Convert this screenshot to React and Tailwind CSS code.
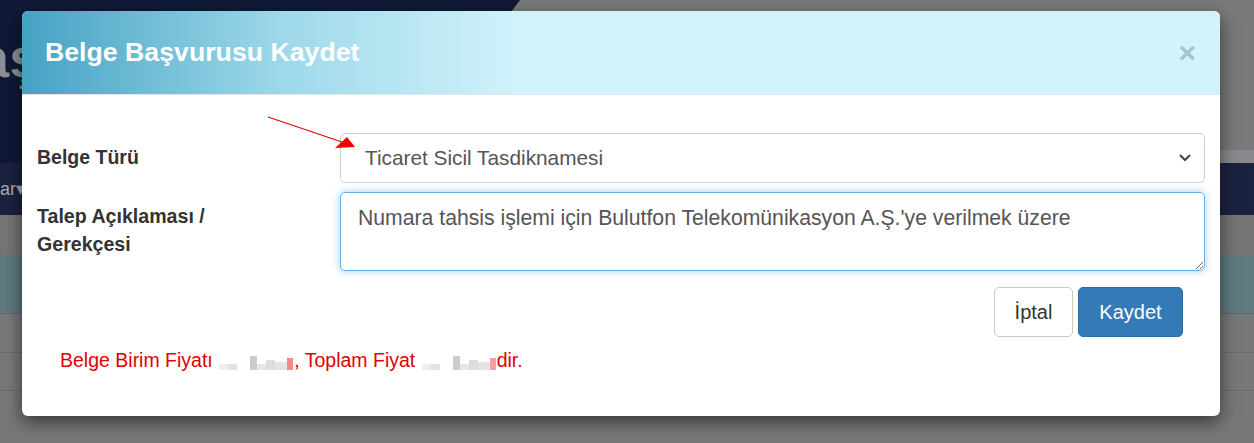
import React from 'react';

const Blur = ({ tail }) => (
    <span className="inline-flex items-end h-[18px] mx-[1px] align-[-3px] gap-0">
        <span className="w-[9px] h-[6px] bg-[#eee]" />
        <span className="w-[9px] h-[6px] bg-[#e2e2e2]" />
        <span className="w-[13px] h-[6px] bg-white" />
        <span className="w-[7px] h-[14px] bg-[#ccc]" />
        <span className="w-[9px] h-[6px] bg-[#e6e6e6]" />
        <span className="w-[9px] h-[10px] bg-[#ddd]" />
        <span className="w-[12px] h-[8px] bg-[#e4e4e4]" />
        <span className={`w-[6px] h-[12px] ${tail}`} />
    </span>
);

const App = () => {
    return (
        <div className="relative w-full h-[443px] overflow-hidden bg-[#777] font-['Liberation_Sans',Arial,sans-serif]">
            {/* page behind the backdrop */}
            <div className="relative h-[163px] bg-[#7a7a7a]">
                <svg className="absolute inset-0" width="1254" height="163">
                    <polygon points="0,0 520,0 505,20 470,163 0,163" fill="#0f1936" />
                    <rect x="1220" y="150" width="34" height="13" fill="#8a8a8e" />
                </svg>
                <div className="absolute left-[-22px] top-[30px] text-[56px] font-bold text-[#8e8e96] leading-none">aş</div>
            </div>
            <div className="h-[52px] bg-[#1b2240] flex items-center text-[18px] text-[#a9acb6]">ar▾</div>
            <div className="h-[40px] bg-[#757575]" />
            <div className="h-[58px] bg-[#5f7a80]" />
            <div className="h-[39px] bg-[#787878] border-t border-[#666]" />
            <div className="h-[38px] bg-[#787878] border-t border-[#6a6a6a]" />
            <div className="h-[53px] bg-[#787878] border-t border-[#6a6a6a]" />

            {/* modal */}
            <div className="absolute inset-0 pt-[11px] pl-[22px] pr-[34px]">
                <div className="relative h-[405px] bg-white rounded-[6px] overflow-hidden shadow-[0_6px_18px_rgba(0,0,0,0.55)]">
                    <div className="h-[84px] flex items-center justify-between pl-[23px] pr-[24px] border-b border-[#e5e5e5] bg-[linear-gradient(90deg,#45a2c4_0%,#9fd9ea_22%,#d2f3fc_42%,#d2f3fc_100%)]">
                        <h4 className="text-[26.7px] font-bold text-white leading-none">Belge Başvurusu Kaydet</h4>
                        <span className="text-[30px] font-bold text-[#a8c2c8] leading-none">×</span>
                    </div>

                    <div className="px-[15px] pt-[38px]">
                        <div className="flex items-center">
                            <label className="w-[303px] text-[19.5px] font-bold text-[#333]">Belge Türü</label>
                            <div className="flex-1 h-[50px] border border-[#ccc] rounded-[5px] flex items-center justify-between pl-[24px] pr-[12px] text-[20.8px] text-[#555]">
                                <span>Ticaret Sicil Tasdiknamesi</span>
                                <svg width="14" height="10" viewBox="0 0 14 10">
                                    <polyline points="2,2 7,7 12,2" fill="none" stroke="#444" strokeWidth="2" />
                                </svg>
                            </div>
                        </div>

                        <div className="flex items-start mt-[9px]">
                            <label className="w-[303px] pt-[10px] text-[19.6px] leading-[28px] font-bold text-[#333]">
                                Talep Açıklaması /<br />Gerekçesi
                            </label>
                            <textarea
                                readOnly
                                value="Numara tahsis işlemi için Bulutfon Telekomünikasyon A.Ş.'ye verilmek üzere"
                                className="flex-1 h-[79px] border border-[#66afe9] rounded-[5px] px-[17px] py-[12px] text-[21.2px] leading-[26px] text-[#555] outline-none shadow-[0_0_8px_rgba(102,175,233,0.6)] font-['Liberation_Sans',Arial,sans-serif]"
                            />
                        </div>

                        <div className="flex justify-end gap-[5px] mt-[16px] pr-[22px]">
                            <button className="w-[79px] h-[50px] border border-[#ccc] rounded-[5px] bg-white text-[20px] text-[#333]">İptal</button>
                            <button className="w-[105px] h-[50px] border border-[#2e6da4] rounded-[5px] bg-[#337ab7] text-[20px] text-white">Kaydet</button>
                        </div>

                        <p className="mt-[9px] pl-[23px] text-[19.5px] text-[#e00000]">
                            Belge Birim Fiyatı <Blur tail="bg-[#f28a8a]" />, Toplam Fiyat <Blur tail="bg-[#f5a0a0]" />dir.
                        </p>
                    </div>

                    <svg className="absolute left-0 top-0 pointer-events-none" width="400" height="160">
                        <line x1="246" y1="106" x2="320" y2="131" stroke="#e00" strokeWidth="1.2" />
                        <polygon points="333,136 325,126 313,137" fill="#e00" />
                    </svg>
                </div>
            </div>
        </div>
    );
};

export default App;
